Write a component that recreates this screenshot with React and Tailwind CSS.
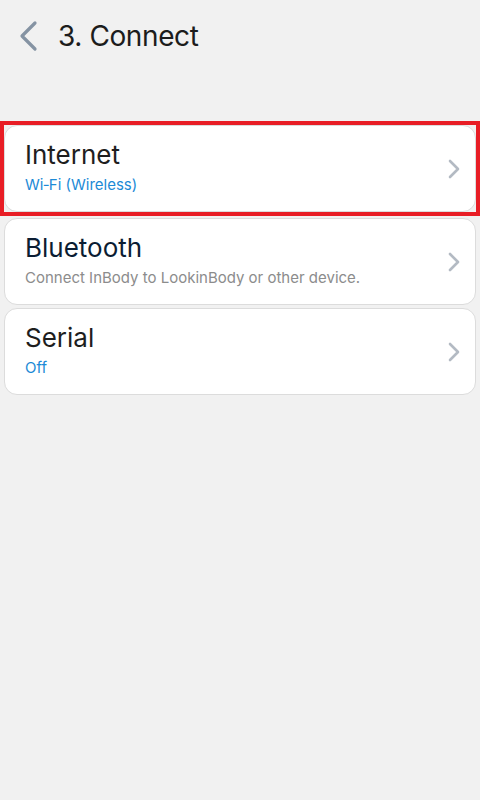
import React from 'react'

const items = [
    { title: 'Internet', sub: 'Wi‑Fi (Wireless)', subColor: 'text-[#1c8ad6]', titleColor: 'text-[#1e1e1e]', selected: true },
    { title: 'Bluetooth', sub: 'Connect InBody to LookinBody or other device.', subColor: 'text-[#8c8c8c]', titleColor: 'text-[#0b1d33]' },
    { title: 'Serial', sub: 'Off', subColor: 'text-[#1c8ad6]', titleColor: 'text-[#1e1e1e]' },
]

function Chevron() {
    return (
        <svg width="14" height="22" viewBox="0 0 14 22" fill="none">
            <path d="M3 3 L11 11 L3 19" stroke="#b3bac3" strokeWidth="2.6" strokeLinecap="round" strokeLinejoin="round" />
        </svg>
    )
}

function Card({ item, h }) {
    return (
        <div className={`${h} bg-white rounded-[13px] border border-[#dcdcdc] flex items-center justify-between pl-[20px] pr-[14px]`}>
            <div className="flex flex-col self-stretch pt-[14px]">
                <span className={`text-[26px] leading-[30px] ${item.titleColor}`}>{item.title}</span>
                <span className={`text-[15px] leading-[18px] mt-[6px] ${item.subColor}`}>{item.sub}</span>
            </div>
            <Chevron />
        </div>
    )
}

export default function App() {
    return (
        <div className="w-[480px] h-[800px] bg-[#f1f1f1] overflow-hidden" style={{ fontFamily: 'Inter, "Noto Sans", sans-serif' }}>
            <div className="h-[72px] flex items-center pl-[15px]">
                <svg width="26" height="36" viewBox="0 0 26 36" fill="none">
                    <path d="M20 5 L7 18 L20 31" stroke="#8593a3" strokeWidth="3.2" strokeLinecap="round" strokeLinejoin="round" />
                </svg>
                <h1 className="ml-[17px] text-[28px] text-[#1c1c1c] tracking-[-0.4px]">3. Connect</h1>
            </div>
            <div className="mt-[49px] px-[4px] flex flex-col">
                <div className="-mx-[4px] border-4 border-[#e81d25]">
                    <Card item={items[0]} h="h-[87px]" />
                </div>
                <div className="mt-[2px]">
                    <Card item={items[1]} h="h-[87px]" />
                </div>
                <div className="mt-[3px]">
                    <Card item={items[2]} h="h-[87px]" />
                </div>
            </div>
        </div>
    )
}
